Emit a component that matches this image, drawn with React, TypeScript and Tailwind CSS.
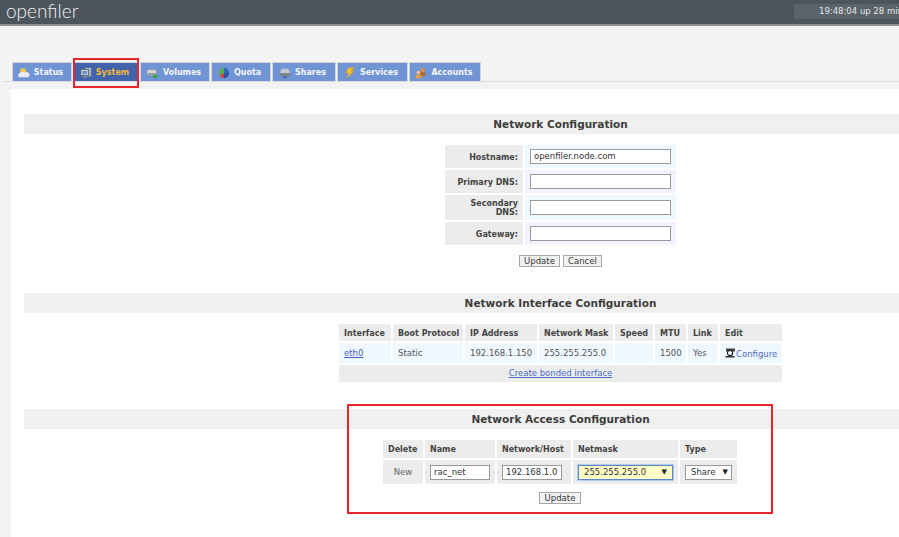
const font = { fontFamily: '"DejaVu Sans", Verdana, sans-serif' };

function StatusIcon() {
  return (
    <svg width="12" height="12" viewBox="0 0 14 14">
      <circle cx="6" cy="5" r="3.5" fill="#f4c23c" />
      <path d="M2 12a2.5 2.5 0 0 1 .6-4.9A3 3 0 0 1 8 6.6 2.7 2.7 0 0 1 12 12z" fill="#e8ecf2" />
    </svg>
  );
}

function SystemIcon() {
  return (
    <svg width="12" height="12" viewBox="0 0 14 14">
      <rect x="6" y="1" width="7" height="10" fill="#a9b4c2" />
      <rect x="1" y="3" width="9" height="7" fill="#d5dce6" stroke="#56626f" />
      <rect x="2.5" y="4.5" width="6" height="4" fill="#6f96c8" />
      <rect x="3" y="11" width="5" height="1.5" fill="#8d99a8" />
    </svg>
  );
}

function VolumesIcon() {
  return (
    <svg width="13" height="12" viewBox="0 0 15 14">
      <rect x="1" y="3" width="11" height="7" rx="2" fill="#d6d9dc" stroke="#808890" strokeWidth="0.7" />
      <rect x="2" y="7" width="9" height="2" fill="#8f979e" />
      <path d="M7 10h3V8l4 3-4 3v-2H7z" fill="#3fa33c" />
    </svg>
  );
}

function QuotaIcon() {
  return (
    <svg width="12" height="12" viewBox="0 0 14 14">
      <path d="M7 7V1a6 6 0 0 1 6 6z" fill="#2f68c0" />
      <path d="M7 7h6a6 6 0 0 1-6 6z" fill="#2c52a8" />
      <path d="M7 7v6a6 6 0 0 1-5-3z" fill="#d83a3a" />
      <path d="M7 7l-5 3A6 6 0 0 1 7 1z" fill="#58ac48" />
    </svg>
  );
}

function SharesIcon() {
  return (
    <svg width="12" height="12" viewBox="0 0 14 14">
      <path d="M3 2h8l2 5H1z" fill="#c4c8cc" />
      <rect x="1" y="7" width="12" height="4" fill="#7d858d" />
      <rect x="5" y="11" width="4" height="2" fill="#3a68b0" />
    </svg>
  );
}

function ServicesIcon() {
  return (
    <svg width="12" height="12" viewBox="0 0 14 14">
      <path d="M5 1h7L8.500 5H12L3 13l2.500-6H2z" fill="#f0c030" stroke="#c89420" strokeWidth="0.5" />
    </svg>
  );
}

function AccountsIcon() {
  return (
    <svg width="13" height="12" viewBox="0 0 15 14">
      <circle cx="10" cy="3.500" r="2.500" fill="#d9923c" />
      <path d="M6 11l1.500-5h5L14 10z" fill="#b56a2a" />
      <circle cx="5" cy="6.500" r="2" fill="#f0c27a" />
      <path d="M1 13l1.500-4h5L9 13z" fill="#e8a040" />
    </svg>
  );
}

function ConfigureIcon() {
  return (
    <svg width="11" height="10" viewBox="0 0 11 10" className="shrink-0">
      <path d="M1 0.500h9v3H8V5H3V3.500H1z" fill="#444" />
      <circle cx="5" cy="5" r="2.600" fill="#fff" stroke="#222" strokeWidth="1.200" />
      <path d="M0.500 8h9v1.500h-9z" fill="#333" />
    </svg>
  );
}

const tabs = [
  { name: "Status", icon: <StatusIcon />, w: "w-[60px]" },
  { name: "System", icon: <SystemIcon />, w: "w-[66px]", active: true },
  { name: "Volumes", icon: <VolumesIcon />, w: "w-[70px]" },
  { name: "Quota", icon: <QuotaIcon />, w: "w-[60px]" },
  { name: "Shares", icon: <SharesIcon />, w: "w-[64px]" },
  { name: "Services", icon: <ServicesIcon />, w: "w-[71px]" },
  { name: "Accounts", icon: <AccountsIcon />, w: "w-[72px]" },
];

function SectionBar({ title }: { title: string }) {
  return (
    <div className="h-5 pt-px flex items-center justify-center bg-[#f0f0f0] text-[10.500px] font-bold text-[#3d3d3d]">
      <span className="ml-[198px]">{title}</span>
    </div>
  );
}

function TextInput({ value, className }: { value?: string; className: string }) {
  return (
    <div className={`h-[15px] bg-white border border-[#9a9a9a] flex items-center px-[3px] text-[8.500px] text-[#333] whitespace-nowrap ${className}`}>
      {value}
    </div>
  );
}

function Btn({ label, className }: { label: string; className: string }) {
  return (
    <div className={`h-[12px] flex items-center justify-center bg-[#f2f2f2] border border-[#a8a8a8] text-[8.500px] text-[#333] ${className}`}>
      {label}
    </div>
  );
}

function HostRow({ label, value, bg, h }: { label: React.ReactNode; value?: string; bg: string; h: string }) {
  return (
    <div className={`flex gap-[2px] ${h}`}>
      <div className="w-[78px] pt-px bg-[#ececec] flex items-center justify-end pr-[5px] text-right text-[8px] leading-[9px] font-bold text-[#444]">
        {label}
      </div>
      <div className={`w-[151px] flex items-center px-[5px] ${bg}`}>
        <TextInput value={value} className="w-[141px]" />
      </div>
    </div>
  );
}

const th = "bg-[#ececec] text-left font-bold text-[8px] text-[#444] pl-[5px] pt-[2px] pb-0 pr-0 whitespace-nowrap";
const tdBlue = "bg-[#eff7ff] text-[8.500px] text-[#555] pl-[5px] p-0 whitespace-nowrap";

export default function App() {
  return (
    <div className="relative h-[537px] w-[899px] overflow-hidden bg-[#f4f4f4]" style={font}>
      <header className="h-[26px] bg-[#4d555c] border-b-2 border-[#8e8e8e] flex justify-between pl-[6px]">
        <span className="text-[19px] leading-[22px] text-[#f2f2f2] font-light" style={{ fontFamily: "Lato, sans-serif" }}>
          openfiler
        </span>
        <div className="mt-1 h-[15px] w-[105px] shrink-0 bg-[#5b636a] pl-[25px] text-[8.500px] leading-[15px] text-[#e8e8e8] whitespace-nowrap overflow-hidden">
          19:48:04 up 28 min
        </div>
      </header>

      <nav className="mt-[36px] ml-3 flex h-[19px] gap-px">
        {tabs.map((t) => (
          <div
            key={t.name}
            className={`${t.w} flex items-center justify-center gap-[4px] border-t border-x border-[#d4d4d4] pt-[2px] pr-[3px] text-[8px] font-bold ${
              t.active ? "bg-[#4163aa] text-[#f3b93c]" : "bg-[#7094d4] text-[#f4f6fa]"
            }`}
          >
            {t.icon}
            {t.name}
          </div>
        ))}
      </nav>
      <div className="ml-[3px] h-[8px] border-t border-[#dcdcdc] bg-[#f2f2f2]" />

      <main className="ml-[11px] h-[449px] bg-white pt-[25px] pl-[13px]">
        <SectionBar title="Network Configuration" />
        <div className="mt-[11px] ml-[421px] flex w-[231px] flex-col gap-[2px]">
          <HostRow label="Hostname:" value="openfiler.node.com" bg="bg-[#eff7ff]" h="h-[23px]" />
          <HostRow label="Primary DNS:" bg="bg-[#f7f0fe]" h="h-[23px]" />
          <HostRow label={<>Secondary<br />DNS:</>} bg="bg-[#eff7ff]" h="h-[25px]" />
          <HostRow label="Gateway:" bg="bg-[#f7f0fe]" h="h-[23px]" />
        </div>
        <div className="mt-[10px] ml-[495px] flex gap-[3px]">
          <Btn label="Update" className="w-[41px]" />
          <Btn label="Cancel" className="w-[39px]" />
        </div>

        <div className="mt-[26px]">
          <SectionBar title="Network Interface Configuration" />
        </div>
        <table className="mt-[9px] ml-[313px] w-[447px] table-fixed border-separate border-spacing-[2px]">
          <thead>
            <tr className="h-[17px]">
              <th className={`${th} w-[52px]`}>Interface</th>
              <th className={`${th} w-[70px]`}>Boot Protocol</th>
              <th className={`${th} w-[72px]`}>IP Address</th>
              <th className={`${th} w-[74px]`}>Network Mask</th>
              <th className={`${th} w-[38px]`}>Speed</th>
              <th className={`${th} w-[31px]`}>MTU</th>
              <th className={`${th} w-[30px]`}>Link</th>
              <th className={th}>Edit</th>
            </tr>
          </thead>
          <tbody>
            <tr className="h-[20px]">
              <td className={tdBlue}><span className="text-[#3f5fc4] underline">eth0</span></td>
              <td className={tdBlue}>Static</td>
              <td className={tdBlue}>192.168.1.150</td>
              <td className={tdBlue}>255.255.255.0</td>
              <td className={tdBlue}></td>
              <td className={tdBlue}>1500</td>
              <td className={tdBlue}>Yes</td>
              <td className={tdBlue}>
                <div className="flex items-center text-[#4a6cc8]">
                  <ConfigureIcon />
                  <span className="mt-[2px]">Configure</span>
                </div>
              </td>
            </tr>
            <tr className="h-[17px]">
              <td colSpan={8} className="bg-[#ececec] text-center text-[8.500px] p-0">
                <span className="text-[#4a6cc8] underline">Create bonded interface</span>
              </td>
            </tr>
          </tbody>
        </table>

        <div className="mt-[25px]">
          <SectionBar title="Network Access Configuration" />
        </div>
        <table className="mt-[9px] ml-[357px] w-[358px] table-fixed border-separate border-spacing-[2px]">
          <thead>
            <tr className="h-[18px]">
              <th className={`${th} w-[40px]`}>Delete</th>
              <th className={`${th} w-[70px]`}>Name</th>
              <th className={`${th} w-[74px]`}>Network/Host</th>
              <th className={`${th} w-[105px]`}>Netmask</th>
              <th className={th}>Type</th>
            </tr>
          </thead>
          <tbody>
            <tr className="h-[24px]">
              <td className="bg-[#ececec] p-0 text-center text-[8.500px] text-[#666]">New</td>
              <td className="bg-[#ececec] p-0 pl-[5px]">
                <TextInput value="rac_net" className="w-[60px]" />
              </td>
              <td className="bg-[#ececec] p-0 pl-[5px]">
                <TextInput value="192.168.1.0" className="w-[60px]" />
              </td>
              <td className="bg-[#ececec] p-0 pl-[5px]">
                <div className="flex h-[15px] w-[95px] items-center justify-between border border-[#5b87c8] ring-1 ring-[#b4cdee] bg-[#fdfdc8] pl-[5px] pr-[5px] text-[8.500px] text-[#333]">
                  255.255.255.0
                  <span className="text-[7px] text-[#222]">▼</span>
                </div>
              </td>
              <td className="bg-[#ececec] p-0 pl-[5px]">
                <div className="flex h-[15px] w-[47px] items-center justify-between border border-[#9a9a9a] bg-white pl-[5px] pr-[3px] text-[8.500px] text-[#333]">
                  Share
                  <span className="text-[7px] text-[#222]">▼</span>
                </div>
              </td>
            </tr>
          </tbody>
        </table>
        <div className="mt-[6px] ml-[515px]">
          <Btn label="Update" className="w-[42px]" />
        </div>
      </main>

      {/* red annotation boxes */}
      <div className="absolute left-[73px] top-[58px] h-[30px] w-[66px] border-2 border-[#e8242c]" />
      <div className="absolute left-[347px] top-[404px] h-[110px] w-[426px] border-2 border-[#e8242c]" />
    </div>
  );
}
